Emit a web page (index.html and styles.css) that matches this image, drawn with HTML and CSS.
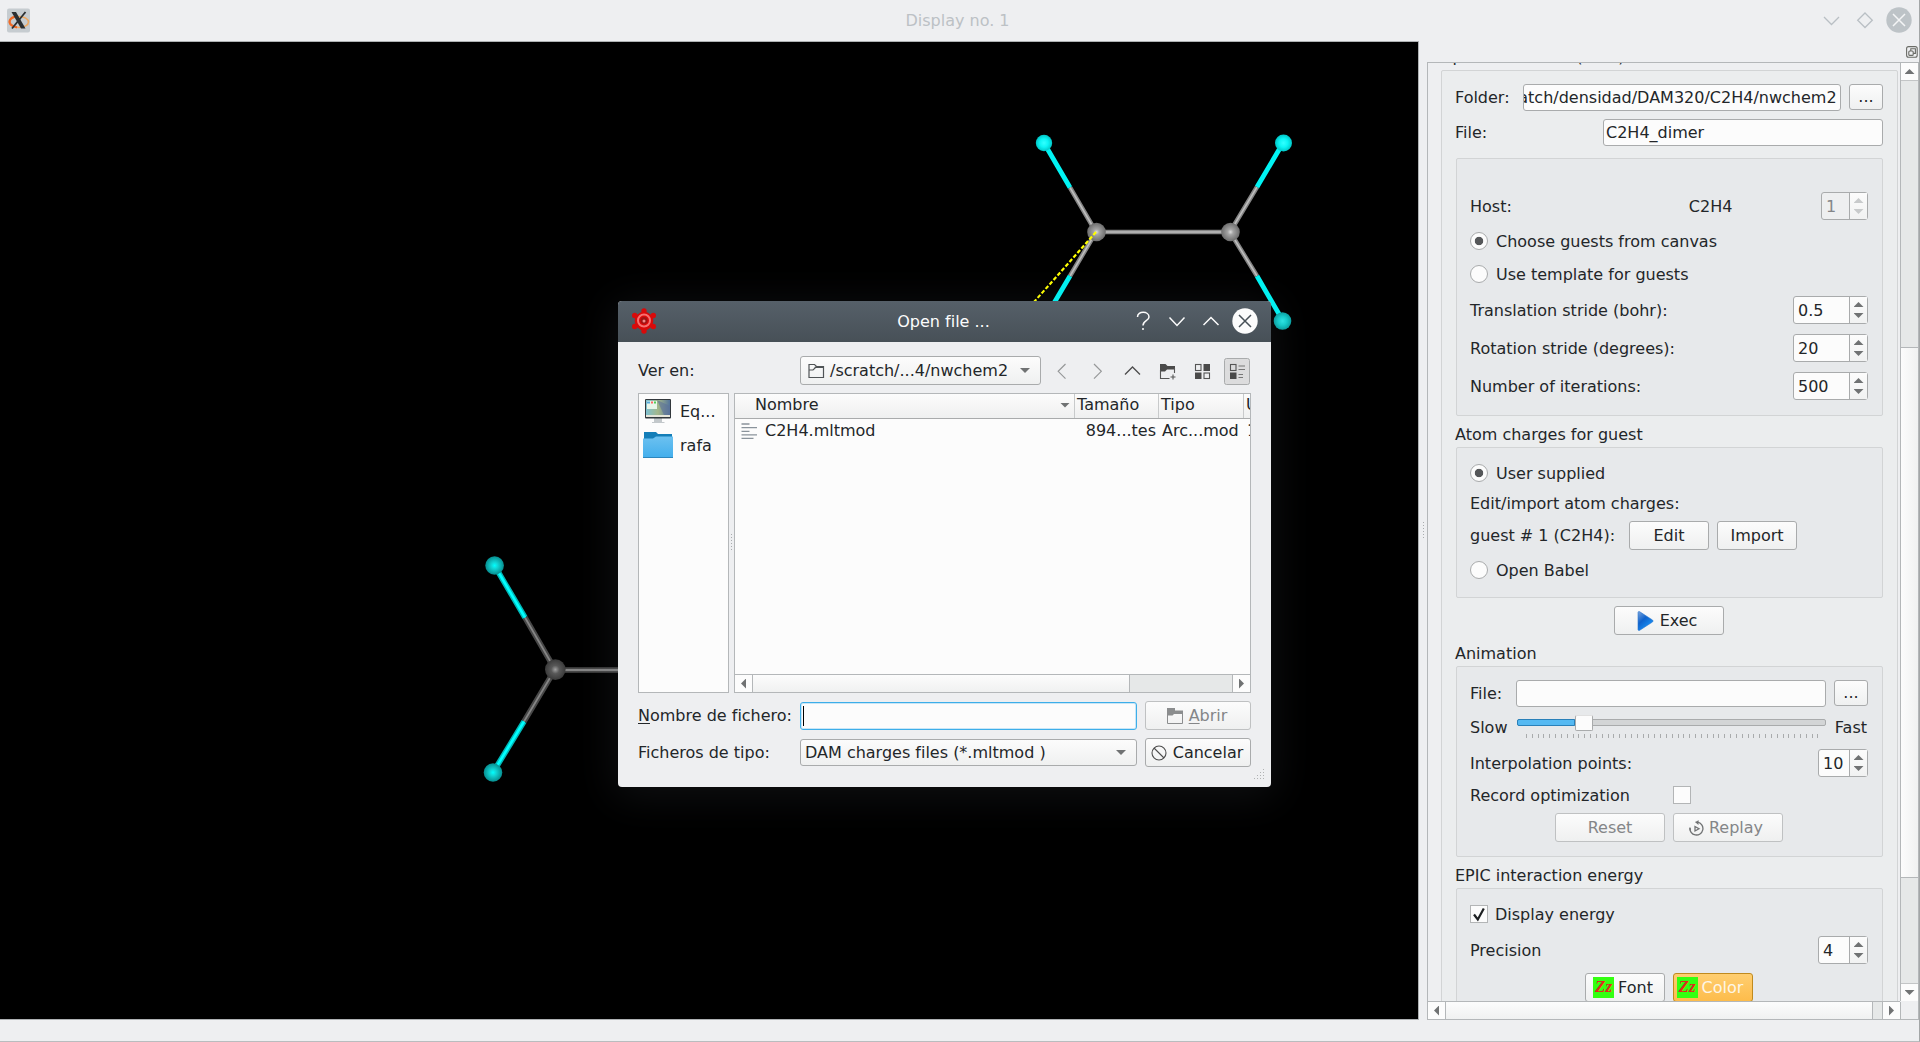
FILE: index.html
```html
<!DOCTYPE html>
<html lang="es">
<head>
<meta charset="utf-8">
<title>Display no. 1</title>
<link rel="stylesheet" href="styles.css">
</head>
<body>
<div class="window">
  <header class="titlebar">
    <svg class="app-icon" width="24" height="26" viewBox="0 0 24 26">
      <rect x="0" y="0.5" width="23" height="24" rx="2" fill="#c6ccd0"/>
      <ellipse cx="12" cy="14" rx="9.5" ry="5.5" fill="none" stroke="#f0a860" stroke-width="1.6"/>
      <path d="M10 19.3C4 18.5 1.500 15 3 12 4 10 6.500 9 9 8.700" fill="none" stroke="#f06a28" stroke-width="2.2"/>
      <path d="M4.500 4h4.500l9.500 16.500h-4.500z" fill="#2b2f32"/>
      <path d="M18.500 4L5 20.500" stroke="#2b2f32" stroke-width="1.800"/>
    </svg>
    <span class="title">Display no. 1</span>
    <svg class="win-buttons" width="96" height="30" viewBox="0 0 96 30" fill="none" stroke="#b9bfc4" stroke-width="1.300">
      <path d="M4 12l7.500 7.500L19 12M45 8l7.300 7.200L45 22.500l-7.300-7.300z"/>
      <circle cx="79" cy="15" r="12.700" fill="#bdc3c7" stroke="none"/>
      <path d="M73 9l12 12M85 9L73 21" stroke="#f4f5f6" stroke-width="1.500"/>
    </svg>
  </header>

  <main class="workspace">
    <section class="canvas">
      <svg width="1418" height="977" viewBox="0 42 1418 977">
        <defs>
          <radialGradient id="hb"><stop offset="0" stop-color="#3ff"/><stop offset=".5" stop-color="#0cf5f5"/><stop offset="1" stop-color="#00c4c5"/></radialGradient>
          <radialGradient id="hd"><stop offset="0" stop-color="#00ffff"/><stop offset=".35" stop-color="#10d4d4"/><stop offset="1" stop-color="#078c8e"/></radialGradient>
          <radialGradient id="hm"><stop offset="0" stop-color="#2ee6e6"/><stop offset=".5" stop-color="#14cdcd"/><stop offset="1" stop-color="#0a9fa0"/></radialGradient>
          <radialGradient id="cb"><stop offset="0" stop-color="#ddd"/><stop offset=".3" stop-color="#a4a4a4"/><stop offset="1" stop-color="#6c6c6c"/></radialGradient>
          <radialGradient id="cd"><stop offset="0" stop-color="#a0a0a0"/><stop offset=".4" stop-color="#585858"/><stop offset="1" stop-color="#3a3a3a"/></radialGradient>
        </defs>
        <g stroke="#858585" stroke-width="4.600">
          <path d="M1096 232L1070 187.500M1096 232L1070 276M1096 232H1230M1230 232L1257 187M1230 232L1257 276"/>
        </g>
        <g stroke="#bdbdbd" stroke-width="1.600">
          <path d="M1096 232L1070 187.500M1096 232L1070 276M1096 232H1230M1230 232L1257 187M1230 232L1257 276"/>
        </g>
        <path stroke="#00f4f4" stroke-width="4.800" d="M1044 143L1070 187.500M1044 320L1070 276M1283 143L1257 187M1283 321L1257 276"/>
        <g fill="url(#hb)"><circle cx="1044" cy="143" r="8.200"/><circle cx="1283.500" cy="143" r="8.500"/></g>
        <circle cx="1282.500" cy="321" r="8.800" fill="url(#hm)"/>
        <g fill="url(#cb)"><circle cx="1096.500" cy="232" r="9.300"/><circle cx="1230.500" cy="232" r="9.300"/></g>
        <path stroke="#ff0" stroke-width="2.200" stroke-dasharray="4 2" d="M1096 232L1034 302"/>

        <path stroke="#484848" stroke-width="5.600" d="M555 669.500L525 617.500M555 669.500L524 721.500M555 670H640"/>
        <path stroke="#858585" stroke-width="1.800" d="M555 669.500L525 617.500M555 669.500L524 721.500M555 670H640"/>
        <path stroke="#00b8b8" stroke-width="5.600" d="M494.500 565.500L525 617.500M493 772.500L524 721.500"/>
        <path stroke="#0ff" stroke-width="2.600" d="M494.500 565.500L525 617.500M493 772.500L524 721.500"/>
        <g fill="url(#hd)"><circle cx="494.600" cy="565.500" r="9.300"/><circle cx="493" cy="772.500" r="9.300"/></g>
        <circle cx="555.300" cy="669.600" r="10.300" fill="url(#cd)"/>
      </svg>
    </section>
    <div class="splitter"><i class="dots"></i></div>

    <aside class="dock">
      <div class="dock-head">
        <svg width="12" height="12" viewBox="0 0 12 12" fill="none" stroke="#6a6b66" stroke-width="1.100">
          <rect x=".6" y=".6" width="10.600" height="10.600" rx="2"/><rect x="2.800" y="5" width="4.400" height="4.400" rx="1"/><path d="M4.800 5V2.800h4.600v4.600H7.200"/>
        </svg>
      </div>
      <div class="scroll-area">
        <div class="viewport">
          <div class="cut-title">Optimize cluster (EPIC)</div>
          <div class="group outer">
            <div class="row folder"><label>Folder:</label><div class="field end"><span>/scratch/densidad/DAM320/C2H4/nwchem2</span></div><div class="btn dots3">...</div></div>
            <div class="row file"><label>File:</label><div class="field">C2H4_dimer</div></div>

            <div class="group g1">
              <div class="row low host"><label>Host:</label><span class="host-name">C2H4</span><div class="spin w46 off"><b>1</b><i></i></div></div>
              <div class="row low choose"><i class="radio on"></i><span>Choose guests from canvas</span></div>
              <div class="row low template"><i class="radio"></i><span>Use template for guests</span></div>
              <div class="row low trans"><label>Translation stride (bohr):</label><div class="spin w74"><b>0.5</b><i></i></div></div>
              <div class="row low stride"><label>Rotation stride (degrees):</label><div class="spin w74"><b>20</b><i></i></div></div>
              <div class="row low stride"><label>Number of iterations:</label><div class="spin w74"><b>500</b><i></i></div></div>
            </div>

            <h3>Atom charges for guest</h3>
            <div class="group g2">
              <div class="row low user"><i class="radio on"></i><span>User supplied</span></div>
              <div class="row import">Edit/import atom charges:</div>
              <div class="row guest"><label>guest # 1 (C2H4):</label><div class="btn w80">Edit</div><div class="btn w80">Import</div></div>
              <div class="row low babel"><i class="radio"></i><span>Open Babel</span></div>
            </div>

            <div class="row exec"><div class="btn w110">
              <svg width="17" height="20" viewBox="0 0 17 20"><defs><linearGradient id="pl" x1="0" y1="0" x2=".7" y2="1"><stop offset="0" stop-color="#7fa6dc"/><stop offset=".45" stop-color="#0f62cc"/><stop offset="1" stop-color="#1b9cff"/></linearGradient></defs><path d="M1 1.500C1 .5 2 .3 2.800.8L15.500 9q1.200 1 0 2L2.800 19.200C2 19.700 1 19.500 1 18.500z" fill="url(#pl)" stroke="#2a76cf" stroke-width=".6"/></svg>
              Exec</div></div>

            <h3>Animation</h3>
            <div class="group g3">
              <div class="row anim-file"><label>File:</label><div class="field"></div><div class="btn dots3">...</div></div>
              <div class="row speed"><label>Slow</label>
                <div class="slider"><div class="track"><i class="fill"></i><i class="knob"></i></div><i class="ticks"></i></div>
                <span>Fast</span></div>
              <div class="row low interp"><label>Interpolation points:</label><div class="spin w50"><b>10</b><i></i></div></div>
              <div class="row low record"><label>Record optimization</label><i class="check"></i></div>
              <div class="row playback"><div class="btn w110 off">Reset</div><div class="btn w110 off replay">
                <svg width="15" height="16" viewBox="0 0 15 16" fill="none" stroke="#707273" stroke-width="1.300"><path d="M1 7.500a6.500 6.500 0 1 0 8-5.300M8.500 2.200H6.500" /><path d="M1.300 10.500L1 8.200" /><path d="M9.500 0v5L6.500 2.500z" fill="#707273" stroke="none"/><path d="M6 6.500v4.500L10 8.700z"/></svg>
                Replay</div></div>
            </div>

            <h3>EPIC interaction energy</h3>
            <div class="group g4">
              <div class="row low display"><i class="check"><svg width="16" height="16" viewBox="0 0 16 16"><path d="M3 8.500L6.800 13.500 12.800 2.500" fill="none" stroke="#1d2022" stroke-width="2.200"/></svg></i><span>Display energy</span></div>
              <div class="row low precision"><label>Precision</label><div class="spin w50"><b>4</b><i></i></div></div>
              <div class="row fonts"><div class="btn w80"><em class="zz">Zz</em>Font</div><div class="btn w80 amber"><em class="zz">Zz</em>Color</div></div>
            </div>
          </div>
        </div>
        <div class="vbar"><div class="cap up"></div><div class="gap1"></div><div class="thumb"></div><div class="gap2"></div><div class="cap down"></div></div>
        <div class="hbar"><div class="cap left"></div><div class="thumb"></div><div class="gap"></div><div class="cap right"></div></div>
      </div>
    </aside>
  </main>
  <footer class="statusbar"></footer>
</div>

<div class="dialog">
  <div class="dlg-title">
    <svg class="dam-icon" width="26" height="28" viewBox="0 0 26 28">
      <g fill="#d80a0a"><circle cx="13" cy="14" r="9.300"/><circle cx="13" cy="4" r="2.700"/><circle cx="13" cy="24" r="2.700"/><circle cx="3.700" cy="8.500" r="2.700"/><circle cx="22.300" cy="8.500" r="2.700"/><circle cx="3.700" cy="19.500" r="2.700"/><circle cx="22.300" cy="19.500" r="2.700"/></g>
      <circle cx="13" cy="13.500" r="6" fill="none" stroke="#f87070" stroke-width="2"/>
      <circle cx="13" cy="13.500" r="3.400" fill="#a01414"/><circle cx="13" cy="14" r="1.500" fill="#e88"/>
    </svg>
    <span class="title">Open file ...</span>
    <svg class="dlg-buttons" width="130" height="30" viewBox="0 0 130 30" fill="none" stroke="#fcfcfc" stroke-width="1.500">
      <path d="M3.500 11C3.500 4.500 15 5 15 11c0 4-6 3.500-6 8.500M9 22v2"/>
      <path d="M35.500 11.500l7.500 8 7.500-8M69.500 19l7.500-7.500 7.500 7.500"/>
      <circle cx="111" cy="15" r="12.700" fill="#fcfcfc" stroke="none"/>
      <path d="M105 9l12 12M117 9l-12 12" stroke="#475057"/>
    </svg>
  </div>
  <div class="dlg-body">
    <div class="look-row">
      <label>Ver en:</label>
      <div class="combo path">
        <svg width="17" height="16" viewBox="0 0 17 16" fill="none" stroke="#505456" stroke-width="1.200"><path d="M1 14.500V1.500h5.500l2 2H15.500v11zM1 7h4l2.500-2.500h8" /><path d="M7 3.500h8.500v1.500H6.500z" fill="#505456" stroke="none"/></svg>
        <span>/scratch/...4/nwchem2</span>
      </div>
      <svg class="tools" width="210" height="28" viewBox="1040 356 210 28" fill="none">
        <path d="M1065.500 363l-7.300 7.300 7.300 7.300M1094 363l7.300 7.300-7.300 7.300" stroke="#969899" stroke-width="1.200"/>
        <path d="M1125 373.500l7.500-7.500 7.500 7.500" stroke="#4d4d4d" stroke-width="1.300"/>
        <path d="M1160 363h5.500l2 2h7.500v3.500h-8l-2 2h-5z" fill="#4a4a4a"/>
        <path d="M1160.500 369v8.500h9M1174.500 367v5M1173 373.500v5M1170.500 376h5" stroke="#555" stroke-width="1.100"/>
        <g stroke="#555" stroke-width="1.100"><rect x="1195.500" y="363.500" width="5.500" height="6"/><rect x="1204" y="372" width="5.500" height="5.500"/></g>
        <path d="M1203.500 363h6.500v7h-6.500zM1195 371.500h6.500v6.500h-6.500z" fill="#4a4a4a"/>
        <rect x="1224.500" y="357.500" width="25" height="26" rx="2" fill="#dcdcdd" stroke="#a9abac"/>
        <rect x="1230.500" y="363.500" width="5.500" height="6" stroke="#555" stroke-width="1.100"/>
        <path d="M1230 371.500h6.500v6.500h-6.500z" fill="#4a4a4a"/>
        <path d="M1238.500 365h6.500M1238.500 368.500h6.500M1238.500 373.500h4.500M1238.500 376.500h4.500" stroke="#777" stroke-width="1.100"/>
      </svg>
    </div>

    <div class="browser">
      <div class="places">
        <div class="place eq">
          <svg width="30" height="26" viewBox="0 0 30 26"><defs><linearGradient id="scr" x2="1"><stop offset="0" stop-color="#7fc0d0"/><stop offset=".5" stop-color="#a4b78a"/><stop offset="1" stop-color="#54749c"/></linearGradient></defs><path d="M11 20h8v4h2.500v1H9v-1h2z" fill="#c3c8cb"/><rect x="2" y="1" width="26" height="19.500" rx="1" fill="#32383c"/><rect x="3" y="2" width="24" height="15" fill="url(#scr)"/><path d="M14 2L21 17h6V8z" fill="#5b7299" opacity=".6"/><rect x="4" y="3" width="10" height="8" fill="#e8f6ea"/><path d="M4 3.500h3v2H4z" fill="#58aadd"/><path d="M8 3.500h2v2H8z" fill="#f66"/><path d="M11 3.500h2v2h-2z" fill="#5c5"/><rect x="3" y="17" width="24" height="2" fill="#e6e6da"/></svg>
          <span>Eq...</span></div>
        <div class="place rafa">
          <svg width="30" height="26" viewBox="0 0 30 26"><defs><linearGradient id="fo" x2="0" y2="1"><stop offset="0" stop-color="#6cc1f0"/><stop offset="1" stop-color="#42aeec"/></linearGradient></defs><path d="M1 0h12l2 2h14v8H1z" fill="#147eb8"/><path d="M0 6.500h10l3-2h17V26H0z" fill="url(#fo)"/><path d="M0 25h30v1H0z" fill="#2c86bd"/></svg>
          <span>rafa</span></div>
      </div>
      <div class="split"><i class="dots"></i></div>
      <div class="files">
        <div class="cols"><div class="c1">Nombre</div><div class="c2">Tamaño</div><div class="c3">Tipo</div><div class="c4">Última</div></div>
        <div class="entry">
          <svg width="17" height="16" viewBox="0 0 17 16" stroke="#8a939b" stroke-width="1.300"><path d="M.5 1h8M.5 4.700h15.500M.5 8.300h8M.5 11.800h15.500M.5 15.300h12"/></svg>
          <span class="e1">C2H4.mltmod</span><span class="e2">894...tes</span><span class="e3">Arc...mod</span><span class="e4">1</span>
        </div>
        <div class="hbar"><div class="cap left"></div><div class="thumb"></div><div class="gap"></div><div class="cap right"></div></div>
      </div>
    </div>

    <div class="dlg-row name"><label><u>N</u>ombre de fichero:</label><div class="field focus"><i class="caret"></i></div>
      <div class="btn off"><svg width="16" height="16" viewBox="0 0 16 16"><path d="M0 0h8v2.500h8V6H7L5.500 7.500H0z" fill="#8b8d8e"/><path d="M.5 6v9.500h15V5" fill="none" stroke="#8b8d8e"/></svg><span><u>A</u>brir</span></div></div>
    <div class="dlg-row type"><label>Ficheros de tipo:</label><div class="combo">DAM charges files (*.mltmod )</div>
      <div class="btn"><svg width="16" height="16" viewBox="0 0 16 16" fill="none" stroke="#4d4d4d" stroke-width="1.100"><circle cx="8" cy="8" r="7"/><path d="M3 3l10 10"/></svg><span>Cancelar</span></div></div>
    <svg class="grip" width="11" height="11" viewBox="0 0 11 11" fill="#b0b2b3"><path d="M9 0h1v1H9zM6 3h1v1H6zM9 3h1v1H9zM3 6h1v1H3zM6 6h1v1H6zM9 6h1v1H9zM0 9h1v1H0zM3 9h1v1H3zM6 9h1v1H6zM9 9h1v1H9z"/></svg>
  </div>
</div>
</body>
</html>
```
FILE: styles.css
```css
* { box-sizing: border-box; }
body {
  margin: 0;
  width: 1920px;
  height: 1042px;
  overflow: hidden;
  position: relative;
  font: 16px/20px "DejaVu Sans", sans-serif;
  color: #232629;
  background: #eeeff1;
}
i, em, b { font-style: normal; font-weight: normal; }
svg { display: block; flex: none; }

.window {
  width: 1920px;
  height: 1042px;
  display: flex;
  flex-direction: column;
  border-right: 1px solid #a3a6a7;
  border-bottom: 1px solid #b9bcbe;
}
.titlebar {
  height: 41px;
  flex: none;
  display: grid;
  grid-template-columns: 108px 1fr 112px;
  align-items: center;
}
.app-icon { margin-left: 7px; }
.titlebar .title { text-align: center; color: #bcc1c5; }
.titlebar .win-buttons { justify-self: end; margin: 0 3px 1px 0; }

.workspace { display: flex; height: 979px; flex: none; }
.canvas {
  width: 1419px;
  flex: none;
  background: #000;
  border: solid #aeb1b3;
  border-width: 1px 1px 1px 0;
  overflow: hidden;
}
.splitter { width: 8px; display: flex; align-items: center; justify-content: center; }
.dots {
  width: 1px;
  height: 18px;
  background: repeating-linear-gradient(#a9acae 0 1px, transparent 1px 3px);
}
.dock { width: 492px; flex: none; display: flex; flex-direction: column; }
.dock-head { height: 21px; flex: none; display: flex; justify-content: flex-end; align-items: flex-start; padding: 5px 1px 0 0; }
.scroll-area {
  height: 958px;
  border: 1px solid #b4b7b9;
  display: grid;
  grid-template: 938px 18px / 472px 18px;
}
.viewport { overflow: hidden; height: 938px; }
.cut-title { height: 7px; padding: 0 0 4px 12px; line-height: 18px; display: flex; align-items: flex-end; overflow: hidden; }

.group { border: 1px solid #d2d4d5; border-radius: 2px; }
.group.outer { margin-left: 13px; width: 457px; height: 1100px; background: #ebedee; padding: 13px 14px 0; }
.group .group { padding: 0 14px 0 13px; background: #e7e9eb; }
.row { display: flex; align-items: center; white-space: nowrap; }
.low > label, .low > span { padding-top: 2px; }
.outer h3 { margin: 0 0 0 -1px; height: 31px; padding-top: 9px; font: inherit; }

.field {
  height: 27px;
  border: 1px solid #a9abac;
  border-radius: 3px;
  background: #fcfcfc;
  padding: 0 2px;
  line-height: 25px;
  overflow: hidden;
}
.btn {
  height: 29px;
  flex: none;
  border: 1px solid #a9abac;
  border-radius: 3px;
  background: linear-gradient(#fcfcfc, #eff0f0);
  display: flex;
  align-items: center;
  justify-content: center;
}
.btn.off { border-color: #bfc1c2; color: #848688; }
.btn.dots3 { width: 34px; height: 26px; margin: 0 0 1px auto; }
.w80 { width: 80px; }
.w110 { width: 110px; }
.spin {
  height: 28px;
  margin-left: auto;
  border: 1px solid #a9abac;
  border-radius: 3px;
  background: #fcfcfc;
  display: grid;
  grid-template-columns: 1fr 18px;
}
.spin b { height: 26px; padding: 1px 0 0 4px; line-height: 26px; }
.spin i {
  border-left: 1px solid #a9abac;
  display: flex;
  flex-direction: column;
  align-items: center;
  justify-content: center;
  gap: 6px;
  background: linear-gradient(#fcfcfc, #f1f2f2);
}
.spin i::before, .spin i::after { content: ""; width: 10px; height: 5px; background: #707273; clip-path: polygon(50% 0, 100% 100%, 0 100%); }
.spin i::after { clip-path: polygon(0 0, 100% 0, 50% 100%); }
.spin.off { background: #eeeff0; color: #848688; }
.spin.off i::before, .spin.off i::after { background: #c8cacb; }
.w46 { width: 47px; }
.w50 { width: 50px; }
.w74 { width: 75px; }
.radio {
  width: 18px;
  height: 18px;
  margin-right: 8px;
  border: 1px solid #a9abac;
  border-radius: 50%;
  background: #fcfcfc;
}
.radio.on { background: radial-gradient(circle, #555759 0 3.8px, #fcfcfc 4.6px); }
.check { width: 18px; height: 18px; border: 1px solid #b3b5b6; background: #fcfcfc; }

.folder .field { width: 318px; margin-left: 13px; display: flex; justify-content: flex-end; padding: 0 3px 0 0; }
.folder label, .file label { margin-left: -1px; }
.file { margin-top: 8px; }
.file .field { width: 280px; margin-left: auto; }
.g1 { height: 258px; margin-top: 12px; }
.host { margin-top: 33px; height: 28px; }
.host-name { margin-left: 177px; }
.choose { margin-top: 7px; height: 28px; }
.template { margin-top: 5px; height: 28px; }
.trans { margin-top: 8px; }
.stride { margin-top: 10px; }
.g2 { height: 151px; }
.user { margin-top: 11px; height: 28px; }
.import { margin-top: 7px; height: 20px; }
.guest { margin-top: 7px; }
.guest label { width: 159px; }
.guest .btn + .btn { margin-left: 8px; }
.babel { margin-top: 6px; height: 28px; }
.exec { margin-top: 8px; padding-left: 158px; }
.exec .btn { gap: 6px; padding-right: 4px; }
.g3 { height: 191px; }
.anim-file { margin-top: 13px; }
.anim-file .field { width: 310px; margin-left: auto; }
.anim-file .btn { margin-left: 8px; }
.speed { margin-top: 8px; height: 26px; }
.speed label { width: 47px; }
.speed > span { margin-left: auto; padding-right: 1px; }
.slider { width: 309px; height: 26px; padding-top: 4px; }
.track { height: 7px; border: 1px solid #a9abac; border-radius: 2px; background: #d3d5d6; display: flex; align-items: flex-start; }
.fill { width: 58px; height: 7px; flex: none; margin: -1px 0 0 -1px; background: #55b9f2; border: 1px solid #2980b9; border-radius: 2px 0 0 2px; }
.knob { width: 18px; height: 16px; margin-top: -5px; background: #fcfcfc; border: 1px solid #a9abac; border-top-color: #e0e0e0; border-radius: 2px; }
.ticks {
  display: block;
  width: 293px;
  height: 4px;
  margin: 8px 0 0 9px;
  background: repeating-linear-gradient(90deg, #a9abac 0 1px, transparent 1px 5.83px);
}
.interp { margin-top: 8px; }
.record { margin-top: 9px; height: 18px; }
.record label { width: 203px; }
.playback { margin-top: 9px; gap: 8px; padding-left: 85px; }
.playback .btn { gap: 5px; }
.playback .replay { padding-right: 4px; }
.g4 { height: 300px; }
.display { margin-top: 16px; height: 18px; }
.display span { margin-left: 7px; }
.precision { margin-top: 13px; }
.fonts { margin-top: 9px; gap: 8px; padding-left: 115px; }
.fonts .btn { gap: 4px; padding-right: 4px; }
.fonts .amber { padding-right: 6px; }
.zz { width: 21px; height: 21px; background: #3f1; color: #e0281c; font: italic bold 17px/19px "Liberation Serif", serif; text-align: center; }
.amber { background: linear-gradient(#ffce70, #fdbc4b); border-color: #c08a1e; color: #fdf6e6; }

.vbar { border-left: 1px solid #b4b7b9; display: flex; flex-direction: column; background: #e6e8e8; }
.vbar .cap, .hbar .cap { background: #fcfcfc; display: flex; align-items: center; justify-content: center; flex: none; }
.vbar .up { height: 18px; border-bottom: 1px solid #c3c5c6; }
.vbar .gap1 { height: 266px; }
.vbar .thumb { height: 531px; border: solid #b4b7b9; border-width: 1px 0; background: linear-gradient(90deg, #fcfcfc, #f0f1f1); }
.vbar .gap2 { height: 105px; }
.vbar .down { height: 18px; border-top: 1px solid #c3c5c6; }
.cap::before { content: ""; background: #707273; }
.up::before, .down::before { width: 10px; height: 5px; }
.left::before, .right::before { width: 5px; height: 10px; }
.up::before { clip-path: polygon(50% 0, 100% 100%, 0 100%); }
.down::before { clip-path: polygon(0 0, 100% 0, 50% 100%); }
.left::before { clip-path: polygon(100% 0, 100% 100%, 0 50%); }
.right::before { clip-path: polygon(0 0, 100% 50%, 0 100%); }
.hbar { border-top: 1px solid #b4b7b9; display: flex; background: #e6e8e8; }
.hbar .left { width: 18px; border-right: 1px solid #b4b7b9; }
.hbar .thumb { width: 427px; background: linear-gradient(#fcfcfc, #f0f1f1); border-right: 1px solid #b4b7b9; }
.hbar .gap { flex: 1; }
.hbar .right { width: 18px; border: solid #b4b7b9; border-width: 0 0 0 1px; }
.scroll-area > .hbar .right { border-right-width: 1px; width: 19px; margin-right: -1px; }

.dialog {
  position: absolute;
  left: 618px;
  top: 301px;
  width: 653px;
  height: 486px;
  border-radius: 4px;
  background: #eeeff1;
  box-shadow: 0 6px 40px 4px rgba(120, 135, 145, .12);
}
.dlg-title {
  height: 41px;
  border-radius: 4px 4px 0 0;
  background: linear-gradient(#566069, #475057);
  color: #fcfcfc;
  display: grid;
  grid-template-columns: 149px 1fr 151px;
  align-items: center;
}
.dam-icon { margin-left: 13px; margin-top: -1px; }
.dlg-title .title { text-align: center; }
.dlg-buttons { justify-self: end; margin: 0 7px 2px 0; }
.dlg-body { padding: 14px 20px 0; height: 445px; }
.look-row { display: flex; align-items: center; height: 29px; }
.look-row label { width: 162px; }
.combo {
  height: 27px;
  border: 1px solid #a9abac;
  border-radius: 3px;
  background: linear-gradient(#fcfcfc, #eff0f0);
  display: flex;
  align-items: center;
  padding-left: 4px;
}
.combo::after { content: ""; width: 10px; height: 5px; margin: 0 10px 0 auto; background: #707273; clip-path: polygon(0 0, 100% 0, 50% 100%); }
.combo.path { width: 241px; height: 29px; padding-left: 7px; gap: 5px; }
.tools { margin-left: -1px; }
.browser { display: flex; height: 300px; margin-top: 8px; }
.places { width: 91px; flex: none; border: 1px solid #b4b7b9; background: #fcfcfc; padding: 4px 0 0 4px; }
.place { display: flex; align-items: center; gap: 7px; height: 26px; }
.place span { padding-top: 2px; }
.place.rafa { margin-top: 8px; }
.split { width: 5px; flex: none; display: flex; align-items: center; justify-content: center; }
.files { width: 517px; border: 1px solid #b4b7b9; background: #fcfcfc; display: flex; flex-direction: column; overflow: hidden; }
.cols { height: 25px; flex: none; display: flex; border-bottom: 1px solid #a9abac; background: linear-gradient(#fcfcfc, #eff0f0); line-height: 22px; }
.cols div { border-right: 1px solid #c8cacb; overflow: hidden; flex: none; padding-left: 2px; }
.cols .c1 { width: 340px; padding: 0 0 2px 20px; display: flex; align-items: center; }
.c1::after { content: ""; width: 10px; height: 5px; margin: 0 4px 0 auto; background: #707273; clip-path: polygon(0 0, 100% 0, 50% 100%); }
.cols .c2 { width: 84px; }
.cols .c3 { width: 85px; }
.cols .c4 { width: 60px; }
.entry { display: flex; align-items: center; height: 24px; padding-left: 6px; white-space: nowrap; flex: none; }
.entry span { flex: none; }
.e1 { width: 304px; padding-left: 7px; }
.e2 { width: 94px; text-align: right; }
.e3 { margin-left: 6px; width: 85px; }
.files .hbar { height: 18px; margin-top: auto; flex: none; }
.files .thumb { width: 377px; }
.dlg-row { display: flex; align-items: center; height: 29px; }
.dlg-row label { width: 162px; }
.dlg-row .field, .dlg-row .combo { width: 337px; }
.dlg-row .btn { width: 106px; margin-left: 8px; gap: 6px; padding-right: 2px; }
.dlg-row.name { margin-top: 8px; }
.dlg-row.type { margin-top: 8px; }
.field.focus { border-color: #3daee9; height: 28px; display: flex; align-items: center; box-shadow: inset 0 0 0 1px #c8e6f7; }
.caret { width: 1px; height: 20px; background: #000; }
.grip { margin: 2px -14px 0 auto; }
u { text-underline-offset: 2px; }
```
